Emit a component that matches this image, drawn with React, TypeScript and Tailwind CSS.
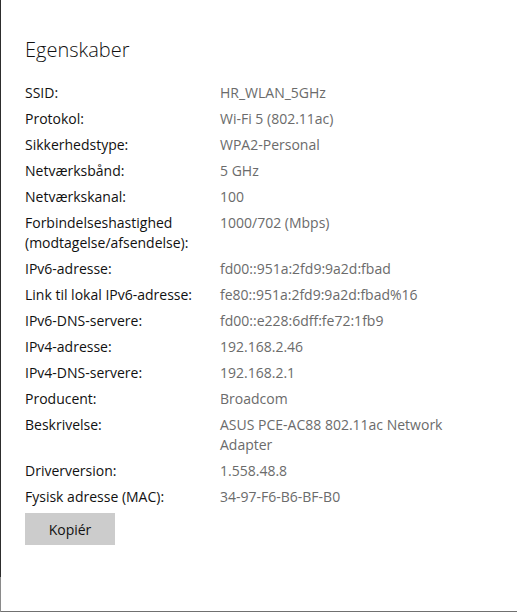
import React from 'react';

const rows: [string, string][] = [
  ['SSID:', 'HR_WLAN_5GHz'],
  ['Protokol:', 'Wi-Fi 5 (802.11ac)'],
  ['Sikkerhedstype:', 'WPA2-Personal'],
  ['Netværksbånd:', '5 GHz'],
  ['Netværkskanal:', '100'],
  ['Forbindelseshastighed (modtagelse/afsendelse):', '1000/702 (Mbps)'],
  ['IPv6-adresse:', 'fd00::951a:2fd9:9a2d:fbad'],
  ['Link til lokal IPv6-adresse:', 'fe80::951a:2fd9:9a2d:fbad%16'],
  ['IPv6-DNS-servere:', 'fd00::e228:6dff:fe72:1fb9'],
  ['IPv4-adresse:', '192.168.2.46'],
  ['IPv4-DNS-servere:', '192.168.2.1'],
  ['Producent:', 'Broadcom'],
  ['Beskrivelse:', 'ASUS PCE-AC88 802.11ac Network Adapter'],
  ['Driverversion:', '1.558.48.8'],
  ['Fysisk adresse (MAC):', '34-97-F6-B6-BF-B0'],
];

export default function App() {
  return (
    <div className="w-[517px] h-[612px] flex bg-white font-['Open_Sans',sans-serif] overflow-hidden">
      {/* window edge: darker at top, lighter near the bottom */}
      <div className="w-px flex flex-col">
        <div className="h-[577px] bg-[#2d2d2d]" />
        <div className="flex-1 bg-[#8a8a8a]" />
      </div>
      <div className="flex-1 flex flex-col border-b border-[#707070]">
        <div className="pl-6 pt-[36px]">
          <h2 className="text-[20px] leading-[28px] text-[#111] font-light">Egenskaber</h2>

          <div className="mt-[19px] grid grid-cols-[195px_250px] gap-y-[6px] text-[14px] leading-[20px]">
            {rows.map(([label, value]) => (
              <React.Fragment key={label}>
                <div className="text-[#111] pr-2">{label}</div>
                <div className="text-[#6b6b6b]">{value}</div>
              </React.Fragment>
            ))}
          </div>

          <button className="mt-[6px] w-[90px] h-[32px] bg-[#cccccc] text-[14px] text-[#111]">
            Kopiér
          </button>
        </div>
      </div>
    </div>
  );
}
